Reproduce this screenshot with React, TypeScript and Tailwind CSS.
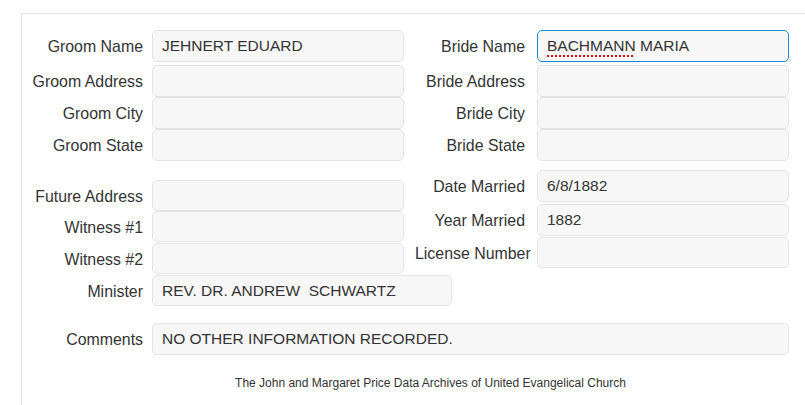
import type { ReactNode } from "react";

type FieldProps = {
  label: string;
  value?: ReactNode;
  labelW: string;
  labelClass?: string;
  gap: string;
  inputW: string;
  h: string;
  focused?: boolean;
  className?: string;
};

function Field({ label, value, labelW, labelClass, gap, inputW, h, focused, className }: FieldProps) {
  return (
    <div className={`flex items-center ${gap} ${className ?? ""}`}>
      <div className={`${labelW} shrink-0 text-right text-[15.9px] pt-[2px] whitespace-nowrap ${labelClass ?? ""}`}>
        {label}
      </div>
      <div
        className={`${inputW} ${h} shrink-0 flex items-center pl-[9px] rounded-[5px] bg-[#f7f7f7] whitespace-pre ${
          focused ? "border border-[#1b8ad3]" : "border border-[#e4e4e4]"
        }`}
      >
        {value}
      </div>
    </div>
  );
}

const leftTop = [
  { label: "Groom Name", value: "JEHNERT EDUARD" },
  { label: "Groom Address" },
  { label: "Groom City" },
  { label: "Groom State" },
];

const rightTop = [
  { label: "Bride Name" },
  { label: "Bride Address" },
  { label: "Bride City" },
  { label: "Bride State" },
];

export default function App() {
  const L = { labelW: "w-[121px]", gap: "gap-[9px]", inputW: "w-[252px]" };
  const R = { labelW: "w-[121px]", gap: "gap-[12px]", inputW: "w-[252px]" };

  return (
    <div className="w-[805px] h-[405px] overflow-hidden bg-white text-[#333] font-['Liberation_Sans',Arial,sans-serif] text-[15.5px]">
      <div className="ml-[21px] mt-[13px] w-[818px] h-[420px] border-l border-t border-[#e5e5e5] pt-[16px]">
        {/* names / addresses */}
        <div className="flex">
          <div className="flex flex-col w-[382px] shrink-0">
            {leftTop.map((f, i) => (
              <Field
                key={f.label}
                {...L}
                label={f.label}
                value={f.value}
                h="h-[32px]"
                className={i === 1 ? "mt-[3px]" : ""}
              />
            ))}
          </div>
          <div className="flex flex-col">
            {rightTop.map((f, i) => (
              <Field
                key={f.label}
                {...R}
                label={f.label}
                h="h-[32px]"
                focused={i === 0}
                className={i === 1 ? "mt-[3px]" : ""}
                value={
                  i === 0 ? (
                    <span>
                      <span className="underline decoration-dotted decoration-[#e01010] decoration-[2px] underline-offset-[4px]">
                        BACHMANN
                      </span>{" "}
                      MARIA
                    </span>
                  ) : undefined
                }
              />
            ))}
          </div>
        </div>

        {/* marriage details */}
        <div className="flex items-start">
          <div className="flex flex-col mt-[19px] w-[382px] shrink-0">
            <Field {...L} label="Future Address" h="h-[31px]" />
            <Field {...L} label="Witness #1" h="h-[31px]" />
            <Field {...L} label="Witness #2" h="h-[31px]" className="mt-[1px]" />
            <Field
              {...L}
              inputW="w-[300px]"
              label="Minister"
              value="REV. DR. ANDREW  SCHWARTZ"
              h="h-[31px]"
              className="mt-[1px]"
            />
          </div>
          <div className="flex flex-col mt-[9px]">
            <Field {...R} label="Date Married" value="6/8/1882" h="h-[32px]" />
            <Field {...R} label="Year Married" value="1882" h="h-[32px]" className="mt-[2px]" />
            <Field
              {...R}
              label="License Number"
              labelClass="pl-[11px]"
              h="h-[31px]"
              className="mt-[1px]"
            />
          </div>
        </div>

        <Field
          {...L}
          inputW="w-[637px]"
          label="Comments"
          value="NO OTHER INFORMATION RECORDED."
          h="h-[32px]"
          className="mt-[17px]"
        />

        <div className="mt-[20px] text-center text-[12px] leading-[16px]">
          The John and Margaret Price Data Archives of United Evangelical Church
        </div>
      </div>
    </div>
  );
}
